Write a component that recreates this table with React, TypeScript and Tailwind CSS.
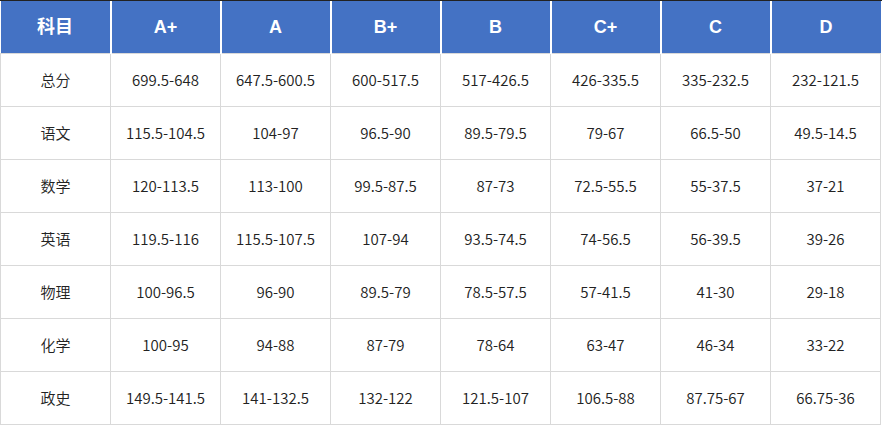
import React from "react";

const headers = ["科目", "A+", "A", "B+", "B", "C+", "C", "D"];
const rows: string[][] = [
  ["总分", "699.5-648", "647.5-600.5", "600-517.5", "517-426.5", "426-335.5", "335-232.5", "232-121.5"],
  ["语文", "115.5-104.5", "104-97", "96.5-90", "89.5-79.5", "79-67", "66.5-50", "49.5-14.5"],
  ["数学", "120-113.5", "113-100", "99.5-87.5", "87-73", "72.5-55.5", "55-37.5", "37-21"],
  ["英语", "119.5-116", "115.5-107.5", "107-94", "93.5-74.5", "74-56.5", "56-39.5", "39-26"],
  ["物理", "100-96.5", "96-90", "89.5-79", "78.5-57.5", "57-41.5", "41-30", "29-18"],
  ["化学", "100-95", "94-88", "87-79", "78-64", "63-47", "46-34", "33-22"],
  ["政史", "149.5-141.5", "141-132.5", "132-122", "121.5-107", "106.5-88", "87.75-67", "66.75-36"],
];

export default function App() {
  return (
    <div className="w-[882px] h-[426px] bg-white border-t border-[#222]">
      <table
        className="w-[881px] table-fixed border-collapse"
        style={{ fontFamily: '"Noto Sans CJK SC", "Noto Sans", sans-serif' }}
      >
        <thead>
          <tr className="h-[52px] bg-[#4472c4]">
            {headers.map((h, i) => (
              <th
                key={i}
                className={`text-white text-[18px] font-bold text-center pt-[2px] font-['Liberation_Sans','Noto_Sans_CJK_SC',sans-serif] border-x-2 border-white ${i === 0 ? "border-l-0" : ""} ${i === headers.length - 1 ? "border-r-0" : ""}`}
              >
                {h}
              </th>
            ))}
          </tr>
        </thead>
        <tbody>
          {rows.map((r, ri) => (
            <tr key={ri} className="h-[53px]">
              {r.map((c, ci) => (
                <td
                  key={ci}
                  className="text-center text-[15px] font-[350] text-[#222] pt-[2px] border border-[#d9d9d9]"
                >
                  {c}
                </td>
              ))}
            </tr>
          ))}
        </tbody>
      </table>
    </div>
  );
}
